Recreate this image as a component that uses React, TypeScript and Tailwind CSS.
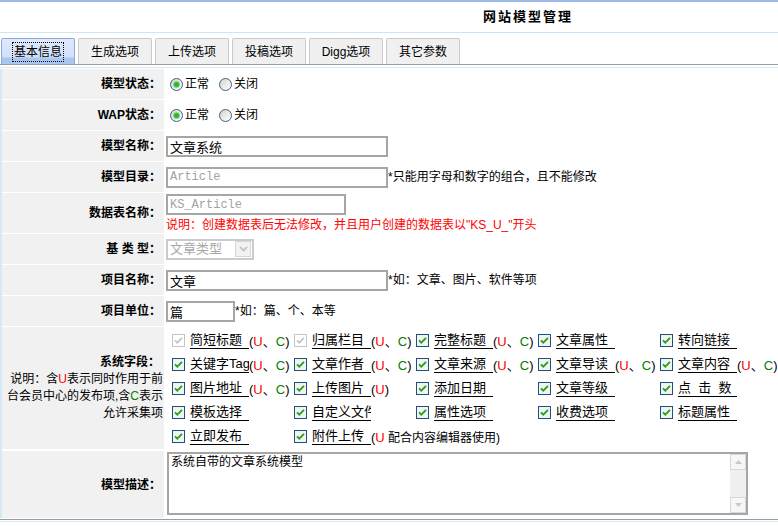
import React from 'react';

const FONT = "font-['Liberation_Sans','Noto_Sans_CJK_SC',sans-serif]";
const MONO = "font-['Liberation_Mono','Noto_Sans_CJK_SC',monospace]";

type Field = { t: string; s?: 'UC' | 'U' | 'E'; d?: boolean };

const fieldRows: Field[][] = [
  [
    { t: '简短标题', s: 'UC', d: true },
    { t: '归属栏目', s: 'UC', d: true },
    { t: '完整标题', s: 'UC' },
    { t: '文章属性' },
    { t: '转向链接' },
  ],
  [
    { t: '关键字Tag', s: 'UC' },
    { t: '文章作者', s: 'UC' },
    { t: '文章来源', s: 'UC' },
    { t: '文章导读', s: 'UC' },
    { t: '文章内容', s: 'UC' },
  ],
  [
    { t: '图片地址', s: 'UC' },
    { t: '上传图片', s: 'U' },
    { t: '添加日期' },
    { t: '文章等级' },
    { t: '点  击  数' },
  ],
  [{ t: '模板选择' }, { t: '自定义文件' }, { t: '属性选项' }, { t: '收费选项' }, { t: '标题属性' }],
  [{ t: '立即发布' }, { t: '附件上传', s: 'E' }],
];

const tabs = ['基本信息', '生成选项', '上传选项', '投稿选项', 'Digg选项', '其它参数'];

function Radio({ checked }: { checked?: boolean }) {
  return (
    <span className="inline-flex h-[13px] w-[13px] shrink-0 items-center justify-center rounded-full border border-[#3d6286] bg-linear-to-br from-[#d4d4cc] to-white">
      {checked && <span className="h-[5px] w-[5px] rounded-full bg-[#2bb82b] shadow-[0_0_0_1px_#8ed88e]" />}
    </span>
  );
}

function Check({ disabled }: { disabled?: boolean }) {
  return (
    <svg width="13" height="13" viewBox="0 0 13 13" className="shrink-0">
      <rect x="0.5" y="0.5" width="12" height="12" fill={disabled ? '#fff' : '#f3f3ef'} stroke={disabled ? '#c5c5c5' : '#1c5180'} />
      <path d="M3 6.3 L5.3 8.7 L10 3.9" fill="none" stroke={disabled ? '#c5c5c5' : '#21a121'} strokeWidth="1.8" />
    </svg>
  );
}

function Suffix({ s }: { s?: Field['s'] }) {
  if (!s) return null;
  return (
    <span className="translate-y-[2px] whitespace-nowrap text-[13px] leading-[16px]">
      (<span className="text-[#ff0000]">U</span>
      {s === 'UC' && (
        <>
          、<span className="text-[#008000]">C</span>)
        </>
      )}
      {s === 'U' && ')'}
      {s === 'E' && <span className="text-[12px]"> 配合内容编辑器使用)</span>}
    </span>
  );
}

function Row({ h, label, children }: { h: number; label: React.ReactNode; children: React.ReactNode }) {
  return (
    <div className="mb-[1px] flex" style={{ height: h }}>
      <div className="flex w-[162px] shrink-0 items-center justify-end bg-[#f1f1f1] pr-[3px] font-bold">{label}</div>
      <div className="ml-[1px] flex min-w-0 flex-1 items-center pl-[1px]">{children}</div>
    </div>
  );
}

function TextBox({ w, value, mono }: { w: number; value: string; mono?: boolean }) {
  return (
    <input
      readOnly
      value={value}
      style={{ width: w }}
      className={`h-[21px] shrink-0 border-2 border-[#a6a6a6] bg-white px-[2px] outline-none ${
        mono ? `${MONO} text-[12px] text-[#a3a3a3]` : `${FONT} text-[13px] text-black`
      }`}
    />
  );
}

export default function App() {
  return (
    <div className={`h-[526px] w-[778px] overflow-hidden bg-white text-[12px] text-black ${FONT}`}>
      <div className="h-[2px] bg-[#9fbbee]" />
      <div className="flex h-[30px] items-center pl-[483px] text-[13px] font-bold tracking-[2px]">网站模型管理</div>
      <div className="h-[1px] bg-[#cbe4f7]" />

      <div className="flex h-[31px] items-end gap-[3px] pl-[1px]">
        {tabs.map((t, i) =>
          i === 0 ? (
            <div
              key={t}
              className="flex h-[26px] w-[74px] items-center justify-center rounded-t-[2px] border border-b-0 border-[#89a9df] bg-[linear-gradient(#e0e8fb,#d3e0f8_72%,#a9c7ef_76%,#a9c7ef)]"
            >
              <span className="px-[1px] outline-1 outline-dotted outline-black">{t}</span>
            </div>
          ) : (
            <div
              key={t}
              className="flex h-[26px] w-[74px] items-center justify-center rounded-t-[2px] border border-b-0 border-[#cacaca] bg-[#f0f0f0]"
            >
              {t}
            </div>
          )
        )}
      </div>
      <div className="h-[1px] bg-[#9c9c9c]" />
      <div className="h-[2px]" />
      <div className="h-[1px] bg-[#d3e9f8]" />
      <div className="h-[1px]" />

      <div className="border-l-2 border-[#d3e9f8]">
        <Row h={30} label="模型状态：">
          <div className="flex items-center pl-[4px]">
            <Radio checked />
            <span className="ml-[2px]">正常</span>
            <span className="ml-[10px]" />
            <Radio />
            <span className="ml-[2px]">关闭</span>
          </div>
        </Row>
        <Row h={30} label="WAP状态：">
          <div className="flex items-center pl-[4px]">
            <Radio checked />
            <span className="ml-[2px]">正常</span>
            <span className="ml-[10px]" />
            <Radio />
            <span className="ml-[2px]">关闭</span>
          </div>
        </Row>
        <Row h={30} label="模型名称：">
          <TextBox w={222} value="文章系统" />
        </Row>
        <Row h={30} label="模型目录：">
          <TextBox w={222} value="Article" mono />
          <span className="whitespace-nowrap">*只能用字母和数字的组合，且不能修改</span>
        </Row>
        <Row h={40} label="数据表名称：">
          <div className="flex flex-col">
            <TextBox w={180} value="KS_Article" mono />
            <span className="mt-[3px] whitespace-nowrap leading-[14px] text-[#ff0000]">
              说明：创建数据表后无法修改，并且用户创建的数据表以"KS_U_"开头
            </span>
          </div>
        </Row>
        <Row h={30} label={<span className="whitespace-pre">基 类 型：</span>}>
          <div className="flex h-[21px] w-[88px] items-center border-2 border-[#cbcbcb] bg-white">
            <span className="flex-1 pl-[2px] text-[13px] text-[#a8a8a8]">文章类型</span>
            <span className="mr-[1px] flex h-[16px] w-[16px] items-center justify-center border border-[#d6d6d6] bg-[#f2f2f2]">
              <svg width="9" height="6" viewBox="0 0 9 6">
                <path d="M1 1 L4.5 4.5 L8 1" fill="none" stroke="#bdbdbd" strokeWidth="1.6" />
              </svg>
            </span>
          </div>
        </Row>
        <Row h={30} label="项目名称：">
          <TextBox w={222} value="文章" />
          <span className="whitespace-nowrap">*如：文章、图片、软件等项</span>
        </Row>
        <Row h={30} label="项目单位：">
          <TextBox w={69} value="篇" />
          <span className="whitespace-nowrap">*如：篇、个、本等</span>
        </Row>

        <div className="mb-[2px] flex h-[122px]">
          <div className="flex w-[162px] shrink-0 flex-col items-end justify-center bg-[#f1f1f1] pr-[1px] text-right leading-[17px]">
            <span className="pr-[3px] font-bold">系统字段：</span>
            <span>
              说明：含<span className="text-[#ff0000]">U</span>表示同时作用于前
              <br />
              台会员中心的发布项,含<span className="text-[#008000]">C</span>表示
              <br />
              允许采集项
            </span>
          </div>
          <div className="ml-[1px] pl-[2px] pt-[1px]">
            {fieldRows.map((r, ri) => (
              <div key={ri} className="grid h-[24px] grid-cols-[repeat(5,122px)]">
                {r.map((f) => (
                  <div key={f.t} className="flex items-center whitespace-nowrap pl-[5px]">
                    <Check disabled={f.d} />
                    <span className="ml-[5px] h-[17px] w-[59px] shrink-0 overflow-hidden whitespace-pre border-b border-black text-[13px] leading-[16px]">
                      {f.t}
                    </span>
                    <Suffix s={f.s} />
                  </div>
                ))}
              </div>
            ))}
          </div>
        </div>

        <div className="flex h-[67px]">
          <div className="flex w-[162px] shrink-0 items-center justify-end bg-[#f1f1f1] pr-[3px] font-bold">模型描述：</div>
          <div className="ml-[3px] pt-[1px]">
            <div className="flex h-[63px] w-[581px] border-2 border-[#a6a6a6] bg-white">
              <div className="flex-1 pl-[2px] pt-[1px] leading-[15px]">系统自带的文章系统模型</div>
              <div className="flex w-[16px] flex-col bg-[#f0f0f0]">
                <div className="flex h-[16px] items-center justify-center border border-[#d8d8d8] bg-[#f7f7f7]">
                  <svg width="7" height="4" viewBox="0 0 7 4">
                    <path d="M0 4 L3.5 0 L7 4 Z" fill="#c8c8c8" />
                  </svg>
                </div>
                <div className="flex-1" />
                <div className="flex h-[16px] items-center justify-center border border-[#d8d8d8] bg-[#f7f7f7]">
                  <svg width="7" height="4" viewBox="0 0 7 4">
                    <path d="M0 0 L3.5 4 L7 0 Z" fill="#c8c8c8" />
                  </svg>
                </div>
              </div>
            </div>
          </div>
        </div>
      </div>
      <div className="h-[1px]" />
      <div className="h-[1px] bg-[#9c9c9c]" />
      <div className="h-[1px]" />
      <div className="h-[1px] bg-[#d3e9f8]" />
    </div>
  );
}
